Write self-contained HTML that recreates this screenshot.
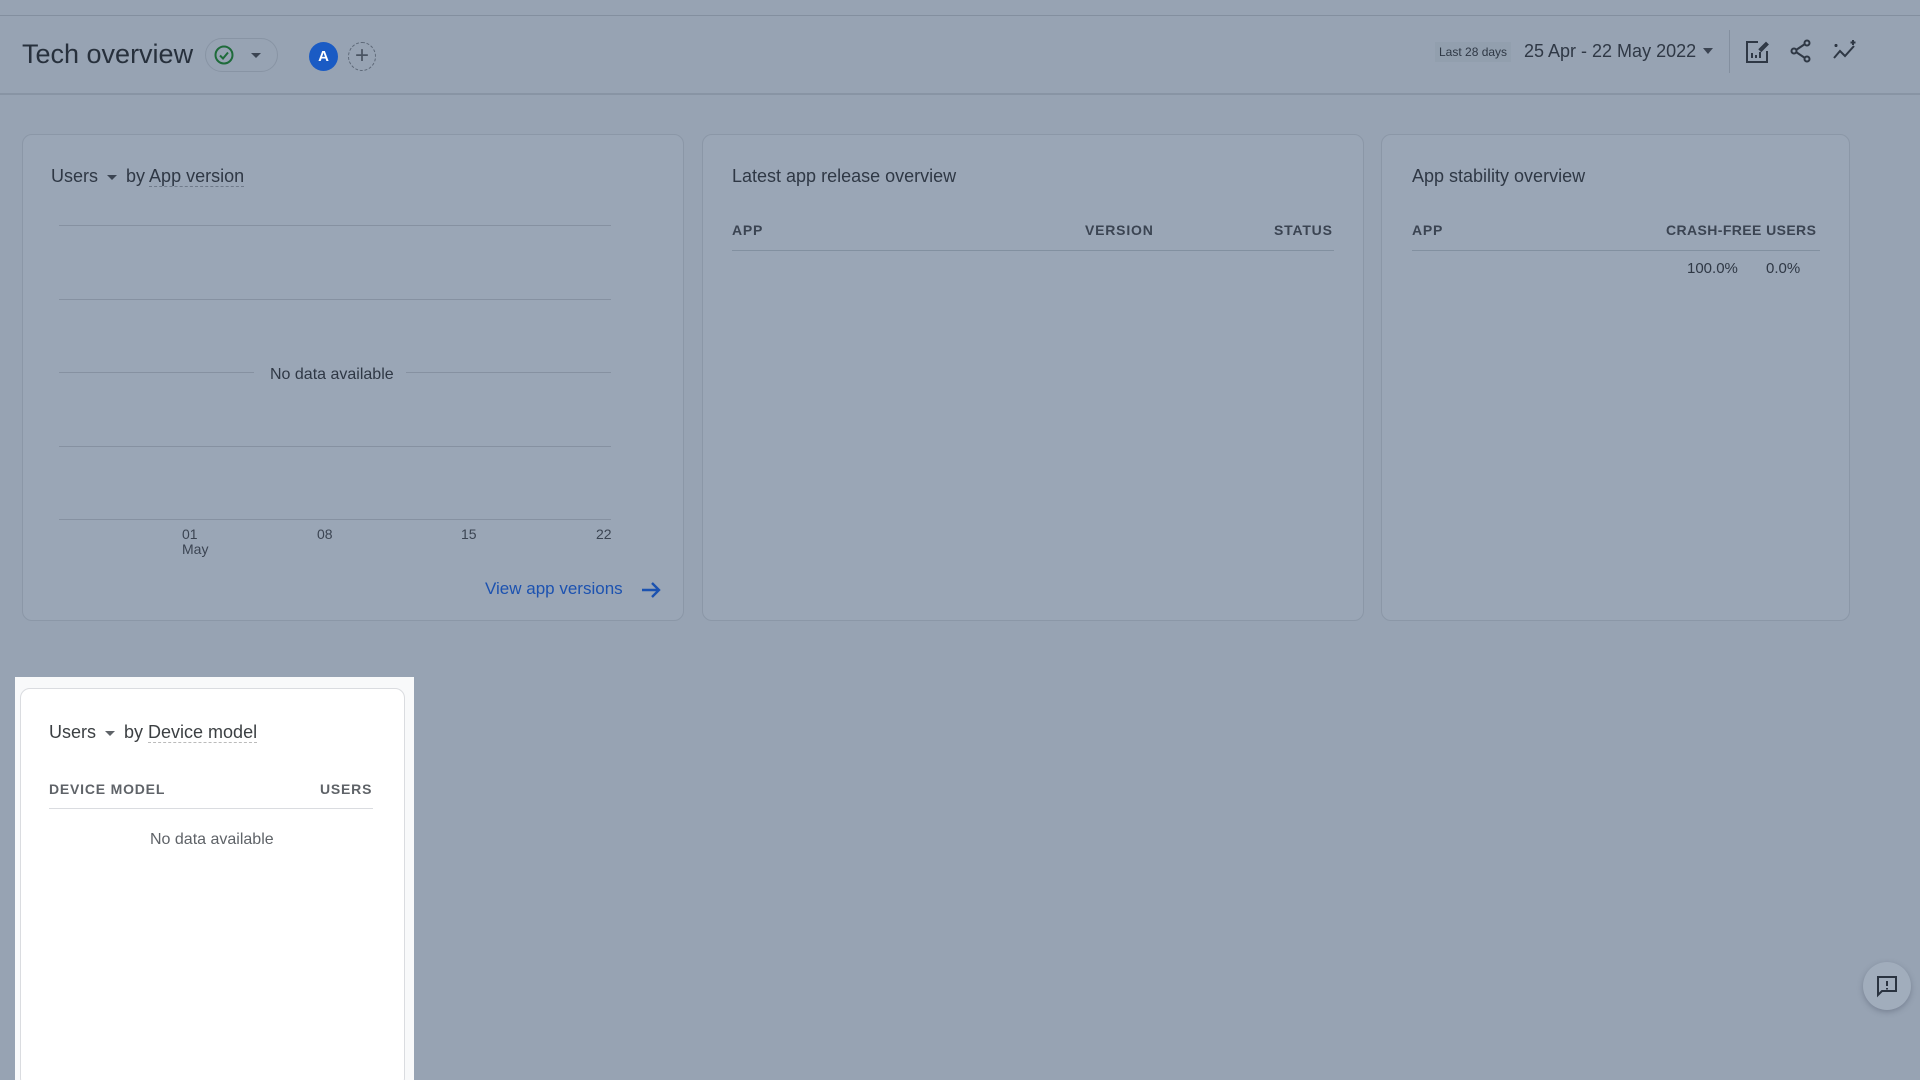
<!DOCTYPE html>
<html><head><meta charset="utf-8"><style>
*{margin:0;padding:0;box-sizing:border-box}
html,body{width:1920px;height:1080px;overflow:hidden}
body{background:#97a3b3;font-family:"Liberation Sans",sans-serif;color:#2f3845;position:relative}
.a{position:absolute;white-space:nowrap}
.card{position:absolute;background:#9aa6b6;border:1px solid #8b97a7;border-radius:10px}
.h{font-size:18px;color:#2f3845}
.th{font-size:14px;font-weight:bold;letter-spacing:0.8px;color:#3b4452}
.gl{position:absolute;left:59px;width:552px;height:1px;background:#8691a1}
.tick{font-size:14px;color:#3b4452}
.dash{border-bottom:1px dashed #6f7a8a}
</style></head><body>
<div class="a" style="left:0;top:15px;width:1920px;height:1px;background:#838f9f"></div>
<div class="a" style="left:0;top:93px;width:1920px;height:2px;background:#8894a4"></div>

<div class="a" style="left:22px;top:39px;font-size:27px;color:#27303c">Tech overview</div>
<div class="a" style="left:205px;top:38px;width:73px;height:34px;border:1px solid #8894a4;border-radius:17px"></div>
<svg class="a" style="left:213px;top:44px" width="22" height="22" viewBox="0 0 22 22"><circle cx="11" cy="11" r="8.5" fill="none" stroke="#1e6b3a" stroke-width="2"/><path d="M7 11.5l3 3 5-6" fill="none" stroke="#1e6b3a" stroke-width="2"/></svg>
<div class="a" style="left:251px;top:53px;width:0;height:0;border-left:5px solid transparent;border-right:5px solid transparent;border-top:5px solid #3b4452"></div>
<div class="a" style="left:309px;top:42px;width:29px;height:29px;border-radius:50%;background:#1a5bc4;color:#fff;font-size:15px;font-weight:bold;text-align:center;line-height:29px">A</div>
<div class="a" style="left:348px;top:42px;width:28px;height:29px;border-radius:50%;border:1px dashed #5d6877;color:#4a5462;font-size:24px;text-align:center;line-height:26px">+</div>

<div class="a" style="left:1435px;top:42px;height:20px;padding:0 4px;background:#929fae;font-size:12px;line-height:20px;color:#2f3845">Last 28 days</div>
<div class="a" style="left:1524px;top:41px;font-size:18px;color:#2f3845">25 Apr - 22 May 2022</div>
<div class="a" style="left:1703px;top:48px;width:0;height:0;border-left:5px solid transparent;border-right:5px solid transparent;border-top:6px solid #3b4452"></div>
<div class="a" style="left:1729px;top:30px;width:1px;height:43px;background:#838f9f"></div>
<svg class="a" style="left:1744px;top:39px" width="26" height="26" viewBox="0 0 26 26" fill="none" stroke="#2f3845" stroke-width="2"><path d="M14 3H3v20h20V12"/><path d="M15 11l7-7 1.5 1.5-7 7"/><path d="M8 19v-5M12 19v-3M16 19v-6"/></svg>
<svg class="a" style="left:1788px;top:38px" width="26" height="26" viewBox="0 0 26 26" fill="none" stroke="#2f3845" stroke-width="2"><circle cx="19" cy="5" r="2.5"/><circle cx="6" cy="13" r="2.5"/><circle cx="19" cy="21" r="2.5"/><path d="M8 12l9-6M8 14l9 6"/></svg>
<svg class="a" style="left:1831px;top:38px" width="28" height="26" viewBox="0 0 28 26" fill="none" stroke="#2f3845" stroke-width="2"><path d="M3 20l6-7 5 5 9-10"/><path d="M22 2v5M19.5 4.5h5M5 6v3M3.5 7.5h3"/></svg>

<!-- card 1 -->
<div class="card" style="left:22px;top:134px;width:662px;height:487px"></div>
<div class="a h" style="left:51px;top:166px">Users <span style="display:inline-block;width:0;height:0;border-left:5px solid transparent;border-right:5px solid transparent;border-top:5px solid #3b4452;vertical-align:middle;margin:0 4px"></span> by <span class="dash">App version</span></div>
<div class="gl" style="top:225px"></div>
<div class="gl" style="top:299px"></div>
<div class="gl" style="top:372px;width:195px"></div>
<div class="gl" style="top:372px;left:406px;width:205px"></div>
<div class="gl" style="top:446px"></div>
<div class="gl" style="top:519px"></div>
<div class="a" style="left:270px;top:366px;font-size:16px;color:#2f3845">No data available</div>
<div class="a tick" style="left:182px;top:526px">01</div>
<div class="a tick" style="left:182px;top:541px">May</div>
<div class="a tick" style="left:317px;top:526px">08</div>
<div class="a tick" style="left:461px;top:526px">15</div>
<div class="a tick" style="left:596px;top:526px">22</div>
<div class="a" style="left:485px;top:579px;font-size:17px;color:#1c52b0">View app versions</div>
<svg class="a" style="left:640px;top:580px" width="22" height="20" viewBox="0 0 22 20" fill="none" stroke="#1c52b0" stroke-width="2.4"><path d="M2 10h17M12 3l7 7-7 7"/></svg>

<!-- card 2 -->
<div class="card" style="left:702px;top:134px;width:662px;height:487px"></div>
<div class="a h" style="left:732px;top:166px">Latest app release overview</div>
<div class="a th" style="left:732px;top:222px">APP</div>
<div class="a th" style="left:1085px;top:222px">VERSION</div>
<div class="a th" style="left:1274px;top:222px">STATUS</div>
<div class="a" style="left:732px;top:250px;width:602px;height:1px;background:#8290a0"></div>

<!-- card 3 -->
<div class="card" style="left:1381px;top:134px;width:469px;height:487px"></div>
<div class="a h" style="left:1412px;top:166px">App stability overview</div>
<div class="a th" style="left:1412px;top:222px">APP</div>
<div class="a th" style="left:1666px;top:222px;letter-spacing:0.4px">CRASH-FREE USERS</div>
<div class="a" style="left:1412px;top:250px;width:408px;height:1px;background:#8290a0"></div>
<div class="a" style="left:1687px;top:260px;font-size:15px;color:#2f3845">100.0%</div>
<div class="a" style="left:1766px;top:260px;font-size:15px;color:#2f3845">0.0%</div>

<!-- highlighted card -->
<div class="a" style="left:15px;top:677px;width:399px;height:403px;background:#f8f9fa"></div>
<div class="a" style="left:20px;top:688px;width:385px;height:400px;background:#fff;border:1px solid #dadce0;border-radius:10px"></div>
<div class="a h" style="left:49px;top:722px;color:#3c4043">Users <span style="display:inline-block;width:0;height:0;border-left:5px solid transparent;border-right:5px solid transparent;border-top:5px solid #5f6368;vertical-align:middle;margin:0 4px"></span> by <span style="border-bottom:1px dashed #bbb">Device model</span></div>
<div class="a th" style="left:49px;top:781px;color:#5f6368">DEVICE MODEL</div>
<div class="a th" style="left:320px;top:781px;color:#5f6368">USERS</div>
<div class="a" style="left:49px;top:808px;width:324px;height:1px;background:#dadce0"></div>
<div class="a" style="left:150px;top:831px;font-size:16px;color:#5f6368">No data available</div>

<!-- feedback -->
<div class="a" style="left:1863px;top:962px;width:48px;height:48px;border-radius:50%;background:#a1adbc;box-shadow:0 2px 6px rgba(60,70,90,.35)"></div>
<svg class="a" style="left:1875px;top:974px" width="24" height="24" viewBox="0 0 24 24" fill="none" stroke="#2a3340" stroke-width="2"><path d="M3 3h18v14H7l-4 4z"/><path d="M12 7v5M12 14v1.5"/></svg>
</body></html>
